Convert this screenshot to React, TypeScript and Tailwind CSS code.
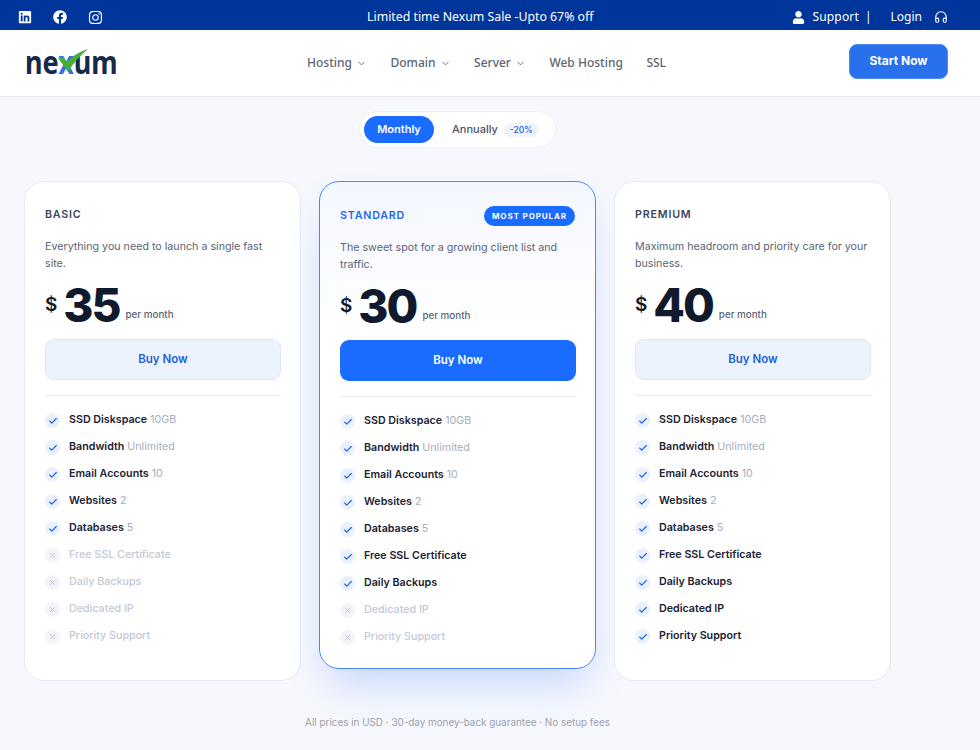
import { ChevronDown, Headphones, Check, X } from 'lucide-react';
import { FaFacebook, FaInstagram, FaLinkedin, FaUser } from 'react-icons/fa';

const features = [
  ['SSD Diskspace', '10GB'],
  ['Bandwidth', 'Unlimited'],
  ['Email Accounts', '10'],
  ['Websites', '2'],
  ['Databases', '5'],
  ['Free SSL Certificate', ''],
  ['Daily Backups', ''],
  ['Dedicated IP', ''],
  ['Priority Support', ''],
];

const plans = [
  { name: 'BASIC', blurb: 'Everything you need to launch a single fast site.', price: '35', included: 5 },
  { name: 'STANDARD', blurb: 'The sweet spot for a growing client list and traffic.', price: '30', included: 7, featured: true },
  { name: 'PREMIUM', blurb: 'Maximum headroom and priority care for your business.', price: '40', included: 9 },
];

function PlanCard({ plan }: { plan: (typeof plans)[number] }) {
  return (
    <div
      className={
        plan.featured
          ? 'h-[488px] rounded-[20px] border-[1.5px] border-[#4a86f5] bg-gradient-to-b from-[#f4f7ff] to-white to-30% pt-[24px] pr-[19px] pl-5 shadow-[0_22px_40px_-10px_rgba(40,100,240,0.25)]'
          : 'h-[500px] rounded-[20px] border border-[#e8ebf3] bg-white pt-[23px] pr-[19px] pl-5'
      }
    >
      <div className="flex h-[20px] items-center justify-between">
        <span className={plan.featured ? 'text-[10.7px] font-semibold tracking-[0.8px] text-[#1e66f5]' : 'text-[10.7px] font-semibold tracking-[0.8px] text-[#3d4657]'}>
          {plan.name}
        </span>
        {plan.featured && (
          <span className="mr-[1px] rounded-full bg-[#1a6bff] px-[8px] py-[3px] text-[8px] leading-[14px] font-bold tracking-[0.9px] text-white">MOST POPULAR</span>
        )}
      </div>
      <p className="mt-[13px] h-[34px] text-[10.7px] leading-[17px] text-[#5b6474]">{plan.blurb}</p>
      <div className="mt-[5px] flex h-[56px] items-center">
        <span className="mr-[6px] text-[19px] font-semibold text-[#111a2c]">$</span>
        <span className="text-[46px] leading-none font-extrabold tracking-[-2px] text-[#111a2c]">{plan.price}</span>
        <span className="mt-[20px] ml-[6px] text-[9.8px] font-medium text-[#5b6474]">per month</span>
      </div>
      <button
        className={
          plan.featured
            ? 'mt-[6px] h-[41px] w-full rounded-[9px] bg-[#1a6bff] pt-[1px] text-[11.5px] font-semibold text-white'
            : 'mt-[6px] h-[41px] w-full rounded-[9px] border border-[#dbe7fb] bg-[#edf3fd] pt-[1px] text-[11.5px] font-semibold text-[#1e5fd8]'
        }
      >
        Buy Now
      </button>
      <div className="mt-[15px] border-t border-[#e8ebf2] pt-[11px]">
        {features.map(([label, value], i) => {
          const on = i < plan.included;
          return (
            <div key={label} className="flex h-[27px] items-center gap-[9px]">
              <span className={on ? 'flex h-[15px] w-[15px] items-center justify-center rounded-full bg-[#eaf1fe] text-[#1a5ff0]' : 'flex h-[15px] w-[15px] items-center justify-center rounded-full bg-[#f3f4f9] text-[#b4bac8]'}>
                {on ? <Check size={10} strokeWidth={2.75} /> : <X size={9} strokeWidth={2} />}
              </span>
              <span className={on ? 'text-[10.7px] font-semibold text-[#1b2333]' : 'text-[10.7px] font-medium text-[#c3c8d4]'}>
                {label}
                {value && <span className="ml-[3px] font-normal text-[#a6adbb]">{value}</span>}
              </span>
            </div>
          );
        })}
      </div>
    </div>
  );
}

export default function App() {
  return (
    <div className="h-[750px] w-[980px] overflow-hidden bg-[#f6f8fd] font-['Inter',sans-serif]">
      <div className="flex h-[30px] items-center justify-between bg-[#00369b] pt-[4px] pr-[32px] pl-[18px] font-['Noto_Sans',sans-serif] text-white">
        <div className="flex items-center gap-[21px]">
          <FaLinkedin size={14} />
          <FaFacebook size={14} />
          <FaInstagram size={15} />
        </div>
        <span className="ml-[66px] text-[12.3px]">Limited time Nexum Sale -Upto 67% off</span>
        <div className="flex items-center text-[12px]">
          <FaUser size={13} />
          <span className="ml-[8px] tracking-[0.15px]">Support</span>
          <span className="ml-[6px]">|</span>
          <span className="ml-[19px]">Login</span>
          <Headphones size={14} className="ml-[12px]" />
        </div>
      </div>

      <div className="flex h-[67px] items-center justify-between border-b border-[#e9ebf0] bg-white pr-[32px] pl-[25px]">
        <div className="relative h-[30px] w-[92px] font-['Noto_Sans',sans-serif]">
          <span className="absolute bottom-[1px] left-0 origin-bottom scale-y-[1.16] text-[27px] leading-none font-bold text-[#16294a]">
            ne<span className="text-[#2f6fed]">x</span>um
          </span>
          <svg viewBox="0 0 40 26" className="absolute top-0 left-[30px] h-[26px] w-[40px]">
            <path d="M3 10 L8 9 L12 14 C16 9 24 4 33 1 C25 8 18 15 13 24 Z" fill="#45ad3c" />
          </svg>
        </div>
        <nav className="ml-[7px] flex items-center gap-[23.5px] font-['Noto_Sans',sans-serif] text-[12px] font-medium text-[#5d6470]">
          <span className="flex items-center gap-[4px]">Hosting <ChevronDown size={11} /></span>
          <span className="flex items-center gap-[4px]">Domain <ChevronDown size={11} /></span>
          <span className="flex items-center gap-[4px]">Server <ChevronDown size={11} /></span>
          <span>Web Hosting</span>
          <span>SSL</span>
        </nav>
        <button className="mb-[3px] h-[35px] w-[99px] rounded-[8px] border border-[#4d8af2] bg-[#2970ed] pb-[1px] text-[12px] font-bold text-white">Start Now</button>
      </div>

      <main className="ml-[24px] flex w-[867px] flex-col items-center">
        <div className="mt-[14px] flex h-[37px] w-[197px] items-center rounded-full border border-[#edf0f6] bg-white pl-[4px]">
          <span className="flex h-[27px] w-[70px] items-center justify-center rounded-full bg-[#1a6bff] text-[11px] font-semibold text-white">Monthly</span>
          <span className="ml-[18px] text-[11px] font-medium text-[#4b5363]">Annually</span>
          <span className="ml-[6px] rounded-full bg-[#eef3fd] px-[6px] text-[8.5px] leading-[14px] font-medium text-[#1e5fd8]">-20%</span>
        </div>
        <div className="mt-[33px] grid w-full grid-cols-3 items-start gap-[18px]">
          {plans.map((plan) => (
            <PlanCard key={plan.name} plan={plan} />
          ))}
        </div>
        <p className="mt-[34px] text-[9.9px] text-[#9aa1ae]">All prices in USD · 30-day money-back guarantee · No setup fees</p>
      </main>
    </div>
  );
}
